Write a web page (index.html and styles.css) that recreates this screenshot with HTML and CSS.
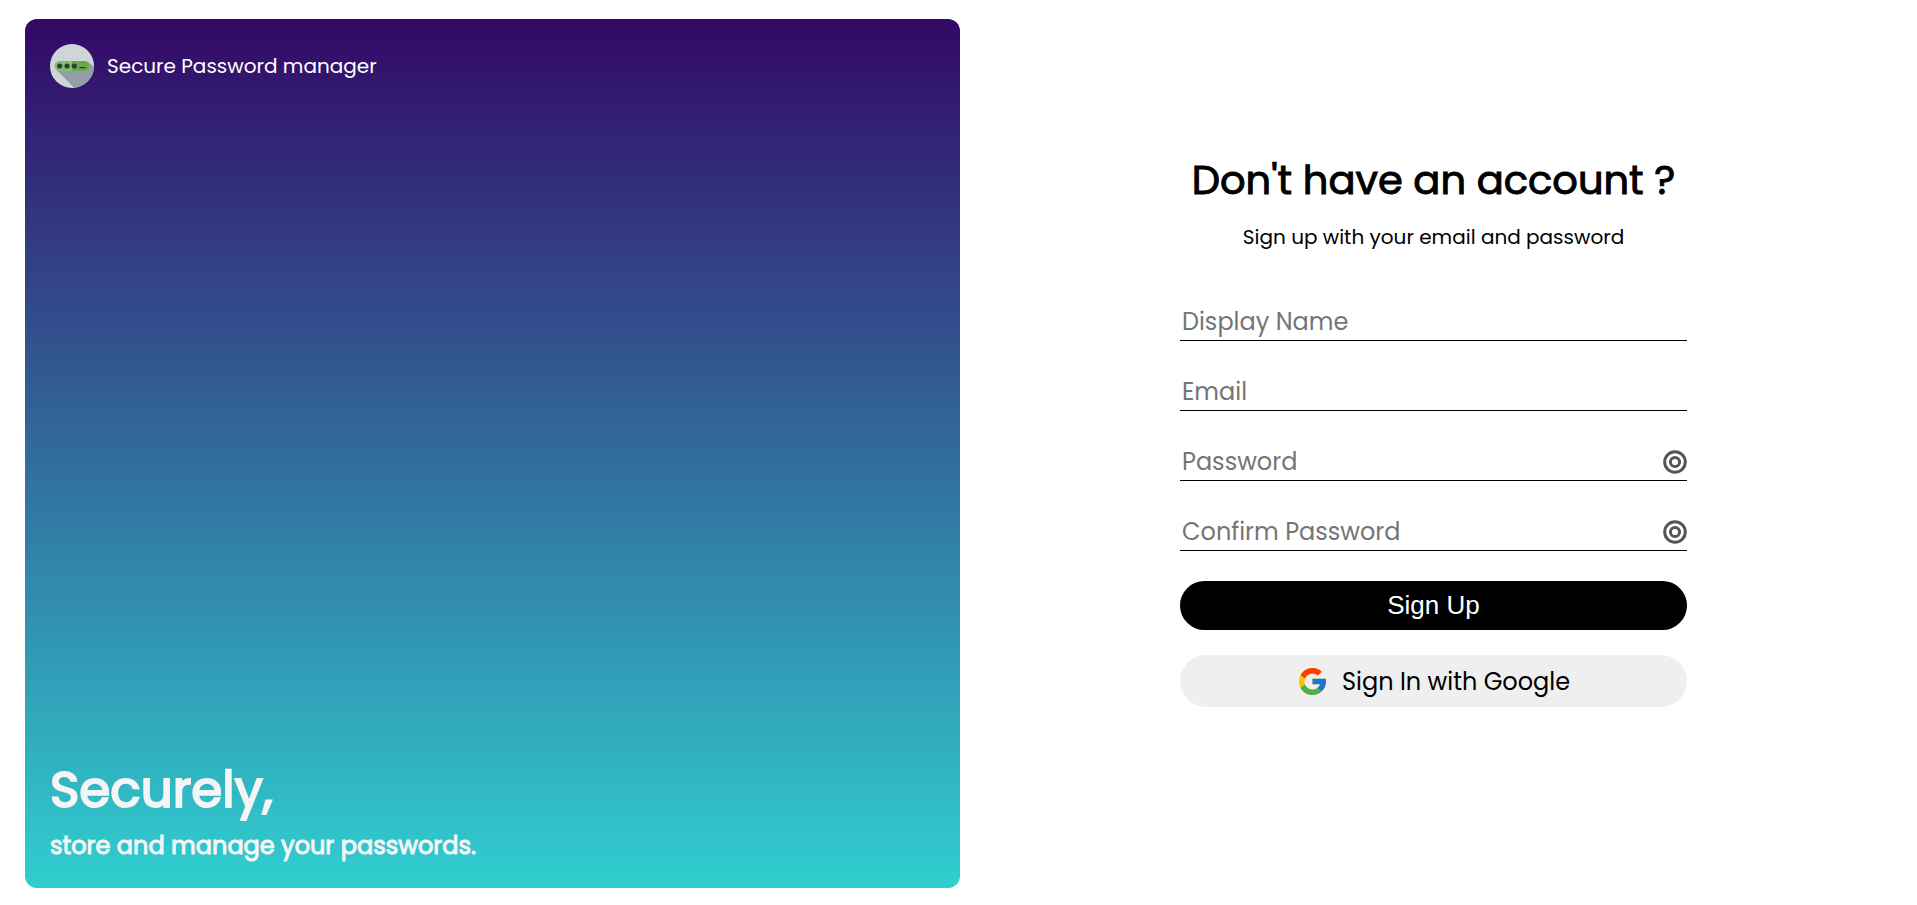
FILE: index.html
```html
<!DOCTYPE html>
<html lang="en">
<head>
<meta charset="utf-8">
<meta name="viewport" content="width=device-width, initial-scale=1">
<title>Secure Password manager</title>
<link rel="stylesheet" href="styles.css">
</head>
<body>
<main class="page">
  <section class="hero">
    <header class="brand">
      <svg class="brand-logo" viewBox="0 0 44 44" aria-hidden="true">
        <defs><clipPath id="disc"><circle cx="22" cy="22" r="22"/></clipPath></defs>
        <g clip-path="url(#disc)">
          <path fill="#cfd5d9" d="M0 0h44v44H0z"/>
          <path fill="#939ea6" d="M6 25.500 L25 44.500H44V22.500L38 18z"/>
          <rect x="4.500" y="17" width="35" height="10" rx="5" fill="#7fc362"/>
          <path fill="#67a94c" d="M22 17h12.500a5 5 0 0 1 0 10H22z"/>
        </g>
        <g fill="#2f3a41"><circle cx="9.700" cy="22" r="2.600"/><circle cx="17" cy="22" r="2.600"/><circle cx="24.300" cy="22" r="2.600"/><path d="M29.500 23h6v1.300h-6z"/></g>
      </svg>
      <span class="brand-name">Secure Password manager</span>
    </header>
    <div class="pitch">
      <h1 class="pitch-title">Securely,</h1>
      <h2 class="pitch-text">store and manage your passwords.</h2>
    </div>
  </section>

  <section class="signup">
    <h2 class="signup-title">Don't have an account ?</h2>
    <p class="signup-lead">Sign up with your email and password</p>
    <form class="form">
      <div class="field"><input class="input" type="text" placeholder="Display Name" aria-label="Display Name"></div>
      <div class="field"><input class="input" type="email" placeholder="Email" aria-label="Email"></div>
      <div class="field">
        <input class="input" type="password" placeholder="Password" aria-label="Password">
        <button class="reveal" type="button" aria-label="Show password">
          <svg viewBox="0 0 24 24" fill="none" stroke="#555" stroke-width="3" aria-hidden="true"><circle cx="12" cy="12" r="10.300"/><circle cx="12" cy="12" r="4.600"/></svg>
        </button>
      </div>
      <div class="field">
        <input class="input" type="password" placeholder="Confirm Password" aria-label="Confirm Password">
        <button class="reveal" type="button" aria-label="Show confirmed password">
          <svg viewBox="0 0 24 24" fill="none" stroke="#555" stroke-width="3" aria-hidden="true"><circle cx="12" cy="12" r="10.300"/><circle cx="12" cy="12" r="4.600"/></svg>
        </button>
      </div>
      <button class="btn btn-primary" type="submit">Sign Up</button>
      <button class="btn btn-google" type="button">
        <svg class="google-logo" viewBox="4 4 40 40" aria-hidden="true">
          <path fill="#FFC107" d="M43.611 20.083H42V20H24v8h11.303c-1.649 4.657-6.080 8-11.303 8-6.627 0-12-5.373-12-12s5.373-12 12-12c3.059 0 5.842 1.154 7.961 3.039l5.657-5.657C34.046 6.053 29.268 4 24 4 12.955 4 4 12.955 4 24s8.955 20 20 20 20-8.955 20-20c0-1.341-.138-2.650-.389-3.917z"/>
          <path fill="#FF3D00" d="M6.306 14.691l6.571 4.819C14.655 15.108 18.961 12 24 12c3.059 0 5.842 1.154 7.961 3.039l5.657-5.657C34.046 6.053 29.268 4 24 4 16.318 4 9.656 8.337 6.306 14.691z"/>
          <path fill="#4CAF50" d="M24 44c5.166 0 9.860-1.977 13.409-5.192l-6.190-5.238C29.211 35.091 26.715 36 24 36c-5.202 0-9.619-3.317-11.283-7.946l-6.522 5.025C9.505 39.556 16.227 44 24 44z"/>
          <path fill="#1976D2" d="M43.611 20.083H42V20H24v8h11.303c-.792 2.237-2.231 4.166-4.087 5.571l6.193 5.238C36.971 39.205 44 34 44 24c0-1.341-.138-2.650-.389-3.917z"/>
        </svg>
        <span>Sign In with Google</span>
      </button>
    </form>
  </section>
</main>
</body>
</html>
```
FILE: styles.css
```css
* { box-sizing: border-box; }

body {
  margin: 0;
  background: #fff;
  color: #000;
  font-family: Poppins, Inter, "Open Sans", sans-serif;
}

h1, h2, p { margin: 0; }

.page {
  display: grid;
  grid-template-columns: 935fr 947fr;
  min-height: 100vh;
  padding: 19px 10px 17px 25px;
}

.hero {
  display: flex;
  flex-direction: column;
  justify-content: space-between;
  padding: 25px 25px 20px;
  border-radius: 12px;
  background: linear-gradient(to top, #30cfd0 0%, #330867 100%);
  color: #f5f5f5;
}

.brand {
  display: flex;
  align-items: center;
  gap: 13px;
}

.brand-logo {
  width: 44px;
  height: 44px;
}

.brand-name {
  font-size: 20px;
  color: #fff;
}

.pitch-title {
  font-size: 50px;
  font-weight: 400;
  line-height: 68px;
  -webkit-text-stroke: 2px currentColor;
}

.pitch-text {
  font-size: 24px;
  font-weight: 400;
  line-height: 44px;
  -webkit-text-stroke: 1px currentColor;
}

.signup {
  display: flex;
  flex-direction: column;
  align-items: center;
  justify-content: center;
  padding-bottom: 52px;
}

.signup-title {
  font-size: 40px;
  font-weight: 400;
  line-height: 64px;
  -webkit-text-stroke: 1px currentColor;
}

.signup-lead {
  margin-top: 9px;
  font-size: 20px;
  line-height: 32px;
}

.form {
  display: flex;
  flex-direction: column;
  width: 100%;
  max-width: 507px;
  margin-top: 43px;
}

.field {
  display: flex;
  align-items: center;
  height: 45px;
  margin-bottom: 25px;
  border-bottom: 1px solid #000;
}

.input {
  flex: 1;
  min-width: 0;
  height: 100%;
  padding: 6px 2px 0;
  border: 0;
  outline: 0;
  background: none;
  font: inherit;
  font-size: 24px;
}

.input::placeholder { color: #757575; }

.reveal {
  display: flex;
  width: 24px;
  padding: 0;
  margin-top: 8px;
  border: 0;
  background: none;
  cursor: pointer;
}

.reveal svg { width: 100%; }

.btn {
  display: flex;
  align-items: center;
  justify-content: center;
  border: 0;
  border-radius: 26px;
  cursor: pointer;
}

.btn-primary {
  height: 49px;
  margin-top: 5px;
  background: #000;
  color: #fff;
  font-family: "Liberation Sans", Arial, sans-serif;
  font-size: 26px;
}

.btn-google {
  gap: 16px;
  height: 52px;
  margin-top: 25px;
  padding: 0 6px 0 8px;
  background: #efefef;
  color: #000;
  font: inherit;
  font-size: 24px;
}

.google-logo {
  width: 27px;
  height: 27px;
}
```
